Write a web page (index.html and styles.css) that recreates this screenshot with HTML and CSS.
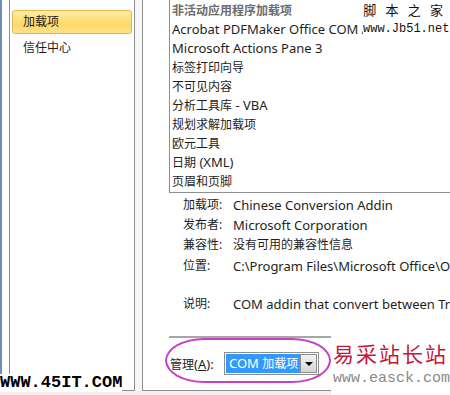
FILE: index.html
```html
<!DOCTYPE html>
<html lang="zh-CN">
<head>
  <meta charset="UTF-8">
  <title>加载项</title>
  <link rel="stylesheet" href="styles.css">
</head>
<body>
  <div class="window">
    <div class="gutter"></div>
    <div class="sidebar">
      <div class="nav-item selected zh">加载项</div>
      <div class="nav-item zh">信任中心</div>
    </div>
    <div class="gap"></div>
    <div class="main">
      <div class="list">
        <div class="row header zh">非活动应用程序加载项</div>
        <div class="row">Acrobat PDFMaker Office COM Addin</div>
        <div class="row">Microsoft Actions Pane 3</div>
        <div class="row zh">标签打印向导</div>
        <div class="row zh">不可见内容</div>
        <div class="row"><span class="zh">分析工具库</span> - VBA</div>
        <div class="row zh">规划求解加载项</div>
        <div class="row zh">欧元工具</div>
        <div class="row"><span class="zh">日期</span> (XML)</div>
        <div class="row zh">页眉和页脚</div>
      </div>

      <div class="details">
        <div class="detail"><span class="label zh">加载项:</span><span>Chinese Conversion Addin</span></div>
        <div class="detail"><span class="label zh">发布者:</span><span>Microsoft Corporation</span></div>
        <div class="detail"><span class="label zh">兼容性:</span><span class="zh">没有可用的兼容性信息</span></div>
        <div class="detail path"><span class="label zh">位置:</span><span>C:\Program Files\Microsoft Office\Office14</span></div>
        <div class="detail desc"><span class="label zh">说明:</span><span>COM addin that convert between Traditional</span></div>
      </div>

      <div class="manage">
        <span class="manage-label"><span class="zh">管理</span>(<u>A</u>):</span>
        <div class="combo">
          <span class="combo-value">COM <span class="zh">加载项</span></span>
          <span class="combo-btn"><svg width="8" height="4" viewBox="0 0 8 4"><path d="M0 0h8L4 4z" fill="#000"/></svg></span>
        </div>
      </div>
    </div>
  </div>

  <div class="ring"></div>

  <div class="mark-jb">
    <div class="jb-title">脚 本 之 家</div>
    <div class="jb-url">www.Jb51.net</div>
  </div>

  <div class="mark-easck">
    <div class="easck-title">易采站长站</div>
    <div class="easck-url">www.easck.com</div>
  </div>

  <div class="mark-45it">WWW.45IT.COM</div>
</body>
</html>
```

FILE: styles.css
```css
body {
  margin: 0;
  width: 450px;
  height: 395px;
  overflow: hidden;
  background-color: #f0f0f0;
  font-family: "Noto Sans", "Noto Sans CJK SC", sans-serif;
  font-size: 13px;
  color: #1e1e1e;
  position: relative;
}

/* CJK glyphs are drawn a little smaller than the Latin text */
.zh {
  font-size: 12px;
}

.window {
  display: flex;
  width: 450px;
  height: 391px;
  border-left: 2px solid #6f8db5;
  box-sizing: border-box;
}

.gutter {
  flex: none;
  width: 7px;
  background-color: #fff;
}

.sidebar {
  flex: none;
  width: 120px;
  background-color: #fff;
  border-left: 1px solid #8e8f8f;
  border-right: 1px solid #8e8f8f;
  border-bottom: 1px solid #8e8f8f;
  padding: 10px 2px 0 2px;
}

.nav-item {
  height: 24px;
  line-height: 22px;
  padding-left: 10px;
  margin-bottom: 2px;
  border: 1px solid transparent;
  box-sizing: border-box;
}

.nav-item.selected {
  background: linear-gradient(#feeba4, #fdd968 60%, #fde08a);
  border-color: #dcb658;
  border-radius: 3px;
}

.gap {
  flex: none;
  width: 7px;
  background-color: #f7f7f7;
}

.main {
  flex: 1;
  min-width: 0;
  overflow: hidden;
  background-color: #fff;
  border-left: 1px solid #8e8f8f;
  border-bottom: 1px solid #8e8f8f;
  position: relative;
}

.list {
  margin: -1px 0 0 26px;
  border: 1px solid #8e8f8f;
  border-right: none;
  padding: 1px 0;
}

.row {
  height: 19px;
  line-height: 19px;
  padding-left: 2px;
  white-space: nowrap;
}

.row.header {
  color: #6d6d6d;
  font-weight: bold;
}

.details {
  padding: 2px 0 0 40px;
}

.detail {
  display: flex;
  height: 20px;
  line-height: 20px;
  white-space: nowrap;
}

.detail .label {
  width: 50px;
  flex: none;
}

.detail.path {
  margin-top: 1px;
}

.detail.desc {
  margin-top: 18px;
}

.manage {
  position: absolute;
  left: 26px;
  top: 336px;
  width: 162px;
  border-top: 2px solid #a7a7a7;
  display: flex;
  align-items: center;
  padding-top: 14px;
}

.manage-label {
  width: 54px;
  padding-left: 1px;
}

.combo {
  display: flex;
  width: 95px;
  height: 23px;
  border: 1px solid #8e8f8f;
  box-sizing: border-box;
  padding: 1px;
}

.combo-value {
  flex: 1;
  background-color: #3399ff;
  color: #fff;
  line-height: 19px;
  padding-left: 3px;
  white-space: nowrap;
  overflow: hidden;
}

.combo-btn {
  flex: none;
  width: 17px;
  border: 1px solid #8e8f8f;
  background: linear-gradient(#f2f2f2, #d4d4d4);
  display: flex;
  align-items: center;
  justify-content: center;
  box-sizing: border-box;
}

.ring {
  position: absolute;
  left: 165px;
  top: 338px;
  width: 166px;
  height: 45px;
  border: 2px solid #c640c8;
  border-radius: 40px / 23px;
  box-sizing: border-box;
}

.mark-jb {
  position: absolute;
  right: 5px;
  top: 2px;
  width: 82px;
  background-color: #fff;
  font-family: "Liberation Serif", "Noto Sans CJK SC", serif;
  color: #111;
  text-align: right;
}

.jb-title {
  font-size: 13px;
  letter-spacing: 3px;
  line-height: 18px;
  margin-right: -1px;
}

.jb-url {
  font-family: "Liberation Mono", monospace;
  font-size: 12px;
  line-height: 18px;
  margin-right: 2px;
}

.mark-easck {
  position: absolute;
  left: 331px;
  top: 338px;
  width: 119px;
  height: 57px;
  background-color: #fff;
  padding-left: 2px;
  box-sizing: border-box;
}

.easck-title {
  font-family: "Noto Sans CJK SC", sans-serif;
  color: #c3183a;
  font-size: 21px;
  letter-spacing: 2px;
  line-height: 30px;
}

.easck-url {
  font-family: "Liberation Mono", monospace;
  color: #8a8a8a;
  font-size: 15px;
  line-height: 22px;
}

.mark-45it {
  position: absolute;
  left: 0;
  top: 374px;
  font-family: "Liberation Mono", monospace;
  font-weight: bold;
  font-size: 17px;
  line-height: 18px;
  color: #000;
  background-color: #fff;
}
```
